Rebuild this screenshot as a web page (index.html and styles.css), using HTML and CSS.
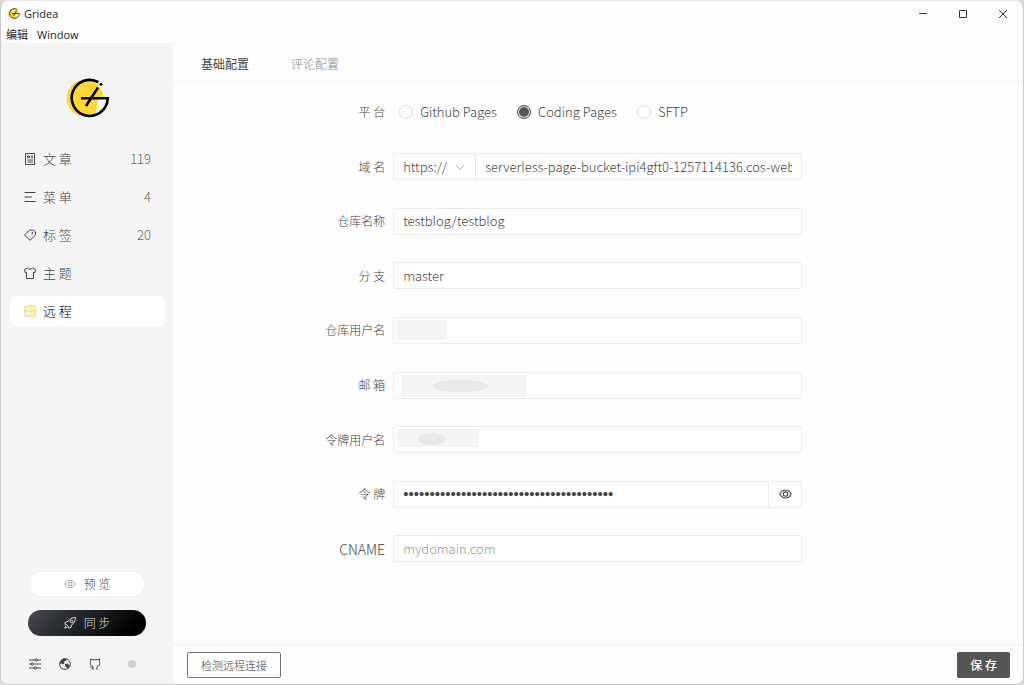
FILE: index.html
```html
<!DOCTYPE html>
<html lang="zh-CN">
<head>
  <meta charset="UTF-8">
  <meta name="viewport" content="width=device-width, initial-scale=1.0">
  <title>Gridea</title>
  <link rel="stylesheet" href="styles.css">
</head>
<body>
  <svg class="sprite" aria-hidden="true">
    <symbol id="logo" viewBox="0 0 44 40">
      <circle cx="19" cy="20" r="18.5" fill="#fdd835"/>
      <path d="M30 34a18 18 0 0 0 9-13h-7z" fill="#fff"/>
      <path d="M32.500 4.200A18 18 0 1 0 41.700 20.200H15M32 9.500L20 28" fill="none" stroke="#000" stroke-width="2.600"/>
      <circle cx="35" cy="6.300" r="1.500" fill="#000"/>
    </symbol>
    <symbol id="eye" viewBox="0 0 24 18">
      <path d="M1.500 9C4 4 7.500 1.500 12 1.500S20 4 22.500 9C20 14 16.500 16.500 12 16.500S4 14 1.500 9z"/>
      <circle cx="12" cy="9" r="4"/>
    </symbol>
  </svg>

  <div class="window">
    <header class="titlebar">
      <svg class="titlebar-logo"><use href="#logo"/></svg>
      <span class="titlebar-name">Gridea</span>
      <div class="window-controls">
        <button type="button" aria-label="Minimize"><svg viewBox="0 0 10 10"><path d="M1 4.500h8"/></svg></button>
        <button type="button" aria-label="Maximize"><svg viewBox="0 0 10 10"><path d="M1.500 1.500h7v7h-7z"/></svg></button>
        <button type="button" aria-label="Close"><svg viewBox="0 0 10 10"><path d="M1 1l8 8M9 1L1 9"/></svg></button>
      </div>
    </header>
    <nav class="menubar">
      <a href="#">编辑</a>
      <a href="#">Window</a>
    </nav>

    <div class="layout">
      <aside class="sidebar">
        <svg class="logo"><use href="#logo"/></svg>
        <nav class="menu">
          <a class="menu-item" href="#">
            <svg viewBox="0 0 12 12"><path d="M1.500.5h9v11h-9zM3.500 3h2v1.500h-2zM7 3h2M7 4.800h2M3.500 7H9M3.500 9H9"/></svg>
            <span>文 章</span><span class="count">119</span>
          </a>
          <a class="menu-item" href="#">
            <svg viewBox="0 0 12 12"><path d="M.5 1.500h11M.5 6h7.500M.5 10.500h11"/></svg>
            <span>菜 单</span><span class="count">4</span>
          </a>
          <a class="menu-item" href="#">
            <svg viewBox="0 0 12 12"><path d="M5.500 1.200L9.500 1 11.500 3v3L6 11.300.5 6z"/><circle cx="8.500" cy="4" r=".6"/></svg>
            <span>标 签</span><span class="count">20</span>
          </a>
          <a class="menu-item" href="#">
            <svg viewBox="0 0 12 12"><path d="M3.500 1C4.500 2.500 7.500 2.500 8.500 1L11.500 2.500 11 5.500 9.500 5.200V11.500h-7V5.200L1 5.500.500 2.500z"/></svg>
            <span>主 题</span>
          </a>
          <a class="menu-item active" href="#">
            <svg viewBox="0 0 12 12"><path d="M1 1h10v10H1zM1 6h10M3 3.500h1.200M3 8.500h1.200M6.500 3.500h2.500M6.500 8.500h2.500"/></svg>
            <span>远 程</span>
          </a>
        </nav>

        <div class="actions">
          <button type="button" class="pill preview"><svg viewBox="0 0 24 18"><use href="#eye"/></svg>预 览</button>
          <button type="button" class="pill sync">
            <svg viewBox="0 0 12 12"><path d="M11.500.500C8 .5 5.500 2 4 4.500L1.500 5 .8 7.200l1.700.3 2 2 .3 1.700L7 10.500 7.500 8C10 6.500 11.500 4 11.500.500zM2 8.500L.800 11.200 3.500 10"/><circle cx="7.500" cy="4.500" r="1.300"/></svg>同 步
          </button>
          <div class="tools">
            <button type="button" aria-label="设置"><svg viewBox="0 0 12 12"><path d="M0 2h6M8.400 2H12M0 6h2M4.400 6H12M0 10h5M7.400 10H12"/><circle cx="7.200" cy="2" r="1.200"/><circle cx="3.200" cy="6" r="1.200"/><circle cx="6.200" cy="10" r="1.200"/></svg></button>
            <button type="button" aria-label="访问网站"><svg viewBox="0 0 12 12"><circle cx="6" cy="6" r="5.400"/><path class="solid" d="M2 2.500L4.500.700 7.500 1 7 3 5 3.500 5.500 5 4 6.500 2.500 5.500 1 6zM6 6l2.500-.5L11 8 8.500 11 7.500 9 6 8z"/></svg></button>
            <button type="button" aria-label="Github"><svg viewBox="0 0 12 12"><path d="M4 12V8.500C1.500 8 1 6.500 1.500 3.500L1.700 1 4 1.800h4L10.300 1l.2 2.500C11 6.500 10.500 8 8 8.500V12M4 10.200C2.500 10.500 2 9.500 .8 8.700"/></svg></button>
            <span class="status"></span>
          </div>
        </div>
      </aside>

      <main class="content">
        <nav class="tabs">
          <a class="active" href="#">基础配置</a>
          <a href="#">评论配置</a>
        </nav>

        <form class="settings" id="settings">
          <div class="form-row" role="radiogroup" aria-labelledby="platform">
            <span class="form-label" id="platform">平 台</span>
            <div class="radios">
              <label><input type="radio" name="platform">Github Pages</label>
              <label><input type="radio" name="platform" checked>Coding Pages</label>
              <label><input type="radio" name="platform">SFTP</label>
            </div>
          </div>
          <div class="form-row">
            <label class="form-label" for="domain">域 名</label>
            <div class="field">
              <div class="protocol">
                <select aria-label="协议"><option>https://</option><option>http://</option></select>
                <svg viewBox="0 0 10 8"><path d="M1 1.500l4 5 4-5"/></svg>
              </div>
              <input type="text" id="domain" value="serverless-page-bucket-ipi4gft0-1257114136.cos-website">
            </div>
          </div>
          <div class="form-row">
            <label class="form-label" for="repository">仓库名称</label>
            <div class="field"><input type="text" id="repository" value="testblog/testblog"></div>
          </div>
          <div class="form-row">
            <label class="form-label" for="branch">分 支</label>
            <div class="field"><input type="text" id="branch" value="master"></div>
          </div>
          <div class="form-row">
            <label class="form-label" for="username">仓库用户名</label>
            <div class="field"><input type="text" id="username"><span class="mask mask-user"></span></div>
          </div>
          <div class="form-row">
            <label class="form-label" for="email">邮 箱</label>
            <div class="field"><input type="text" id="email"><span class="mask mask-email"></span></div>
          </div>
          <div class="form-row">
            <label class="form-label" for="token-username">令牌用户名</label>
            <div class="field"><input type="text" id="token-username"><span class="mask mask-token"></span></div>
          </div>
          <div class="form-row">
            <label class="form-label" for="token">令 牌</label>
            <div class="field">
              <input type="password" id="token" value="0123456789012345678901234567890123456789">
              <button type="button" class="reveal" aria-label="显示令牌"><svg viewBox="0 0 24 18"><use href="#eye"/></svg></button>
            </div>
          </div>
          <div class="form-row">
            <label class="form-label latin" for="cname">CNAME</label>
            <div class="field"><input type="text" id="cname" placeholder="mydomain.com"></div>
          </div>
        </form>

        <footer class="footer">
          <button type="button" class="btn">检测远程连接</button>
          <button type="submit" form="settings" class="btn primary">保 存</button>
        </footer>
      </main>
    </div>
  </div>
</body>
</html>
```
FILE: styles.css
```css
* {
  box-sizing: border-box;
}
body {
  margin: 0;
  background: #dcdcdc;
  color: #444;
  font-family: "Noto Sans CJK SC", "Open Sans", sans-serif;
  font-size: 13px;
  font-weight: 300;
  line-height: 20px;
}
a {
  color: inherit;
  text-decoration: none;
}
button,
input,
select {
  margin: 0;
  font: inherit;
  color: inherit;
}
button {
  padding: 0;
  border: none;
  background: none;
  cursor: pointer;
}
svg {
  fill: none;
  stroke: currentColor;
}
.sprite {
  position: absolute;
  width: 0;
  height: 0;
}
.window {
  display: flex;
  flex-direction: column;
  min-height: 100vh;
  border: 1px solid #ccc;
  border-top-color: #e8e8e8;
  border-radius: 8px;
  background: #fefefe;
  overflow: hidden;
}

/* title bar */
.titlebar {
  display: flex;
  align-items: center;
  height: 25px;
  padding-left: 7px;
  color: #222;
  font-family: "Open Sans", sans-serif;
  font-size: 11px;
  font-weight: 400;
}
.titlebar-logo {
  width: 12px;
  height: 11px;
  margin-right: 4px;
  stroke: none;
}
.window-controls {
  display: flex;
  margin-left: auto;
}
.window-controls button {
  display: flex;
  align-items: center;
  justify-content: center;
  width: 40px;
  height: 25px;
  color: #333;
}
.window-controls svg {
  width: 10px;
  height: 10px;
}
.menubar {
  display: flex;
  gap: 9px;
  height: 17px;
  padding-left: 5px;
  color: #222;
  font-family: "Open Sans", "Noto Sans CJK SC", sans-serif;
  font-size: 11px;
  font-weight: 400;
  line-height: 18px;
}

/* sidebar */
.layout {
  display: flex;
  flex: 1;
}
.sidebar {
  display: flex;
  flex-direction: column;
  width: 172px;
  background: #f5f5f5;
}
.logo {
  width: 44px;
  height: 40px;
  margin: 35px auto 22px 65px;
  stroke: none;
}
.menu {
  display: flex;
  flex-direction: column;
  gap: 8px;
  padding: 4px 8px 0 9px;
}
.menu-item {
  display: flex;
  align-items: center;
  height: 30px;
  padding: 0 14px;
  border-radius: 6px;
}
.menu-item svg {
  width: 12px;
  height: 12px;
  margin-right: 7px;
}
.menu-item .count {
  margin-left: auto;
  color: #666;
}
.menu-item.active {
  background: #fff;
  color: #000;
}
.menu-item.active svg {
  color: #f9cf3a;
}
.actions {
  margin-top: auto;
  padding: 0 27px 13px;
}
.pill {
  display: flex;
  align-items: center;
  justify-content: center;
  gap: 8px;
  width: 100%;
  height: 26px;
  border-radius: 13px;
  font-size: 12px;
}
.pill svg {
  width: 12px;
  height: 12px;
}
.preview {
  margin-bottom: 13px;
  border: 1px solid #eee;
  background: #fff;
}
.sync {
  background: linear-gradient(135deg, #434a50, #000 85%);
  color: #ddd;
}
.tools {
  display: flex;
  align-items: center;
  gap: 16px;
  margin-top: 21px;
}
.tools button,
.tools svg {
  display: block;
  width: 14px;
  height: 14px;
}
.tools svg {
  padding: 1px;
}
.solid {
  fill: currentColor;
  stroke: none;
}
.status {
  width: 8px;
  height: 8px;
  margin-left: 10px;
  border-radius: 50%;
  background: #d0d0d0;
}

/* content */
.content {
  display: flex;
  flex: 1;
  flex-direction: column;
  min-width: 0;
}
.tabs {
  display: flex;
  gap: 42px;
  height: 38px;
  padding-left: 28px;
  border-bottom: 1px solid #f7f7f7;
  color: #888;
  font-size: 12px;
  line-height: 41px;
}
.tabs .active {
  color: #444;
  font-weight: 400;
}
.settings {
  display: grid;
  flex: 1;
  grid-auto-rows: 1fr;
  padding: 4px 26% 68px 0;
}
.form-row {
  display: flex;
  align-items: center;
}
.form-label {
  flex: 0 0 35%;
  width: 35%;
  padding-right: 8px;
  text-align: right;
  white-space: nowrap;
  font-size: 12px;
}
.form-label.latin {
  font-size: 14px;
}
.field {
  position: relative;
  display: flex;
  flex: 1;
  min-width: 0;
  height: 27px;
  border: 1px solid #ececec;
  border-radius: 2px;
  background: #fff;
}
.field input {
  flex: 1;
  width: 100%;
  min-width: 0;
  padding: 0 9px;
  border: none;
  background: none;
  outline: none;
}
.field input::placeholder {
  color: #999;
}
.field input[type="password"] {
  font-family: "Liberation Sans", sans-serif;
  font-size: 15px;
}
.protocol {
  position: relative;
  width: 82px;
  border-right: 1px solid #e6e6e6;
}
.protocol select {
  width: 100%;
  height: 100%;
  padding: 0 9px;
  border: none;
  background: none;
  appearance: none;
}
.protocol svg {
  position: absolute;
  top: 9px;
  right: 10px;
  width: 10px;
  height: 8px;
  color: #bbb;
  pointer-events: none;
}
.reveal {
  display: flex;
  align-items: center;
  justify-content: center;
  width: 33px;
  border-left: 1px solid #ececec;
}
.reveal svg {
  width: 13px;
  height: 10px;
  stroke-width: 2;
}
.radios {
  display: flex;
  gap: 20px;
  padding-left: 6px;
}
.radios label {
  display: flex;
  align-items: center;
  gap: 7px;
}
.radios input {
  width: 14px;
  height: 14px;
  border: 1px solid #ddd;
  border-radius: 50%;
  background: #fff;
  appearance: none;
}
.radios input:checked {
  border-color: #555;
  background: #555;
  box-shadow: inset 0 0 0 1px #fff;
}

/* hidden account values */
.mask {
  position: absolute;
  top: 2px;
  left: 3px;
  width: 50px;
  height: 20px;
  background: #f5f5f5;
}
.mask-email {
  left: 8px;
  width: 124px;
  height: 22px;
  background: radial-gradient(28px 6px at 47% 50%, #e9e9e9 98%, #f5f5f5);
}
.mask-token {
  width: 82px;
  height: 18px;
  background: radial-gradient(14px 6px at 42% 56%, #e9e9e9 98%, #f5f5f5);
}
.footer {
  display: flex;
  align-items: center;
  justify-content: space-between;
  height: 40px;
  padding: 0 13px 0 14px;
  border-top: 1px solid #f2f2f2;
}
.btn {
  height: 26px;
  padding: 0 13px;
  border: 1px solid #777;
  border-radius: 2px;
  font-size: 11px;
}
.btn.primary {
  padding: 0 12px;
  border-color: #555;
  background: #555;
  color: #fff;
  font-size: 12px;
  font-weight: 500;
}
```
